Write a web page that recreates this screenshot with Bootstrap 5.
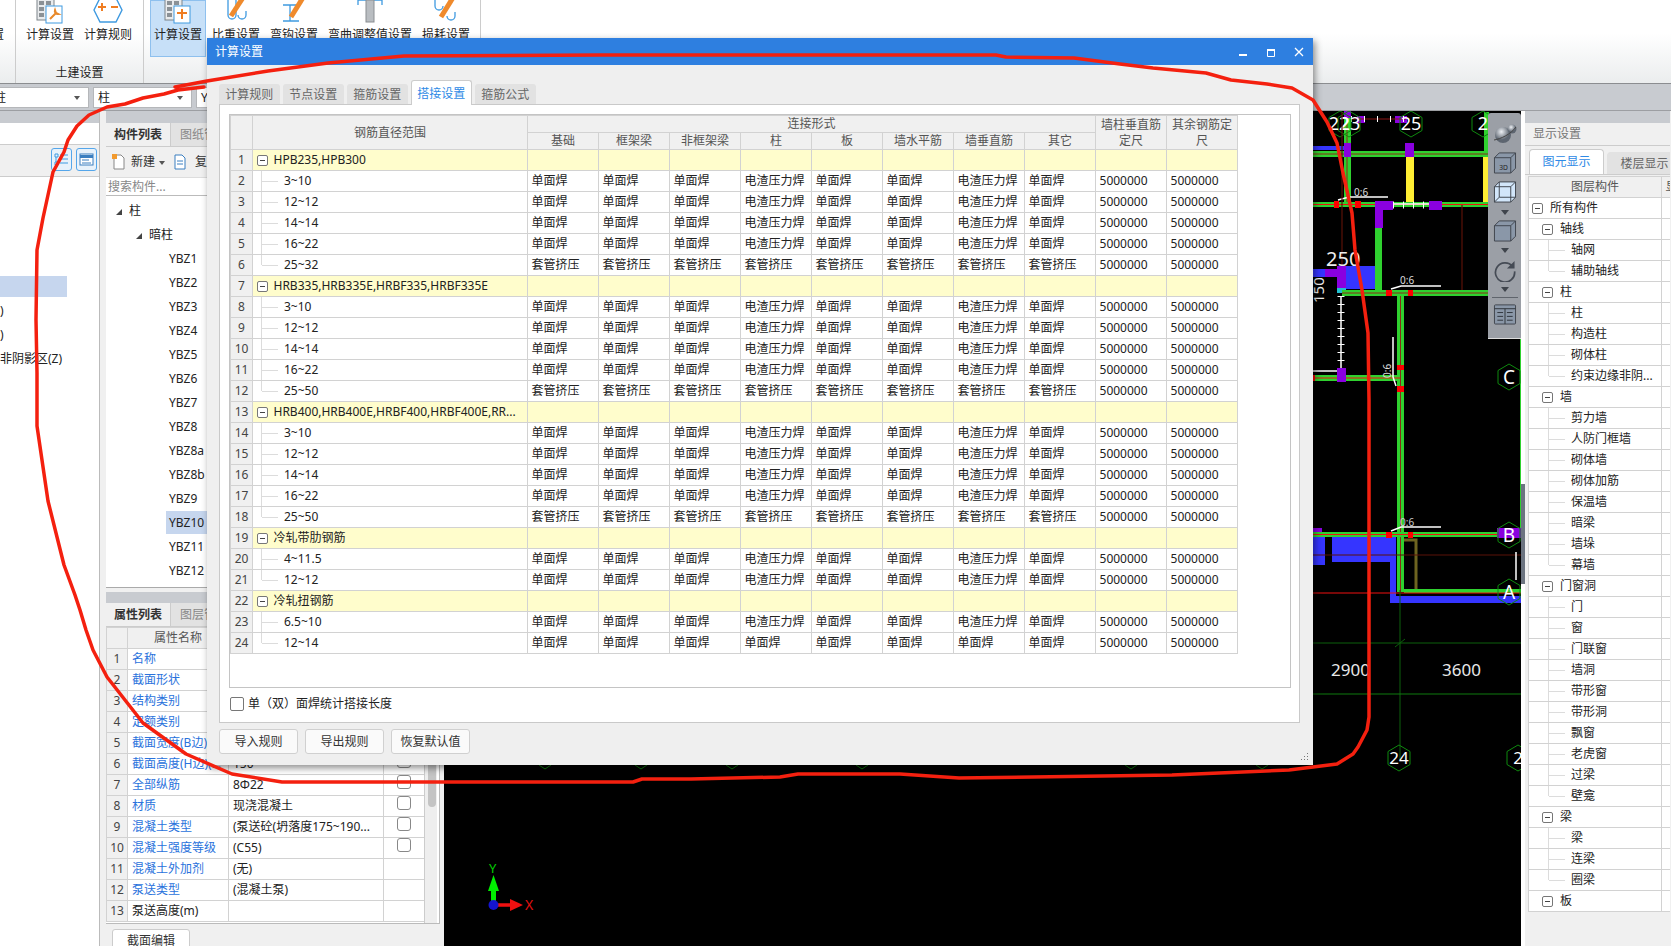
<!DOCTYPE html>
<html lang="zh-CN">
<head>
  <meta charset="UTF-8" />
  <title>计算设置</title>
  <link href="https://cdn.jsdelivr.net/npm/bootstrap@5.3.2/dist/css/bootstrap.min.css" rel="stylesheet">
  <style>
    html, body { margin: 0; height: 946px; overflow: hidden; }
    body { width: 1671px; position: relative; background: #f0f0f0; color: #222; font: 12px/1.3 "Noto Sans", "Noto Sans CJK SC", sans-serif; }

    /* ribbon */
    .rib { height: 83px; background: linear-gradient(#fff 40%, #ebedee); overflow: hidden; }
    .rib-group { height: 83px; border-right: 1px solid #ccc; flex: none; }
    .rib-item { height: 57px; text-align: center; white-space: nowrap; flex: none; }
    .rib-item svg { display: block; margin: 0 auto 3px; }
    .rib-on { background: #c7e0f8; box-shadow: inset 0 0 0 1px #8ec0ee; }
    .rib-label { line-height: 32px; text-align: center; }
    .combo-bar { height: 27px; background: #c8cbd0; border-top: 1px solid #8b8d90; padding-top: 3px; }
    .combo { height: 21px; background: #fff; line-height: 20px; padding-left: 4px; position: relative; flex: none; border: 1px solid #b5b7ba; }
    .combo::after { content: ""; position: absolute; right: 8px; top: 8px; border: 3px solid transparent; border-top: 4px solid #555; }

    .work { height: 836px; border-top: 1px solid #9c9ea2; }
    .band { height: 12px; background: #c8cbd0; }
    .pane-a { width: 100px; background: #fff; border-right: 1px solid #bbb; flex: none; }
    .pane-a-tools { height: 33px; background: #f0f0f0; border-top: 1px solid #ccc; border-bottom: 1px solid #ccc; margin-top: 21px; padding: 3px 2px 0 0; }
    .tool-btn { width: 21px; height: 23px; border: 1px solid #55a6ea; border-radius: 3px; background: #e8f2fb; }
    .tool-btn svg { display: block; margin: 3px auto 0; }
    .pane-a-list { padding-top: 99px; white-space: nowrap; overflow: hidden; }
    .pane-a-list div { height: 21px; line-height: 21px; margin-bottom: 3px; }
    .pane-a-list .hit { width: 67px; background: #c6d6ee; }
    .pane-b { width: 334px; margin-left: 6px; flex: none; background: #f0f0f0; }
    .pane-tabs { height: 24px; border-bottom: 1px solid #ccc; }
    .pane-tab { width: 65px; text-align: center; line-height: 24px; font-weight: 700; color: #333; border-right: 1px solid #ccc; }
    .pane-tab-off { background: #e2e2e2; color: #888; font-weight: 400; width: 80px; text-align: left; padding-left: 9px; }
    .tools-b { height: 30px; padding-left: 5px; color: #333; }
    .search-b { height: 19px; line-height: 18px; background: #fff; color: #888; padding-left: 2px; border-top: 1px solid #ddd; border-bottom: 1px solid #bbb; }
    .tree-b { height: 392px; padding-top: 3px; background: #fff; border-bottom: 1px solid #aaa; }
    .tree-b div { height: 24px; line-height: 24px; white-space: nowrap; }
    .tree-b .lv2 { padding-left: 63px; }
    .tree-b .hit span { background: #c6d6ee; padding: 3px 5px 3px 3px; margin-left: -3px; }
    .tri { display: inline-block; border: 3px solid transparent; border-right-color: #444; border-bottom-color: #444; margin-right: 7px; }
    .gap-band { margin-top: 4px; height: 11px; background: #c8cbd0; }

    .grid-tb { table-layout: fixed; border-collapse: collapse; margin: 0; color: #222; --bs-border-color: #d2d2d2; }
    #lapTb { width: 1007px; }
    #propTb { width: 318px; }
    #layerTb { width: 163px; }
    .grid-tb td, .grid-tb th { padding: 0 3.5px; height: 21px; line-height: 20px; font-weight: 400; font-size: 12px; white-space: nowrap; overflow: hidden; background-color: #fff; color: #222; border: 1px solid #d2d2d2; box-shadow: none; }
    .grid-tb th { background-color: #f0f0f0; color: #555; text-align: center; vertical-align: middle; }
    .grid-tb .num { background-color: #f0f0f0; color: #444; text-align: center; padding: 0; }
    .grid-tb .sum td { background-color: #fffdcc; }
    .grid-tb .sum td.num { background-color: #f0f0f0; }

    .dlg-head th { height: 17px; line-height: 16px; padding: 0; }
    .dlg-head .two { white-space: normal; }
    .box-minus { display: inline-block; width: 11px; height: 11px; border: 1px solid #777; border-radius: 2px; background: #fff; position: relative; vertical-align: -2px; margin-right: 6px; }
    .box-minus::after { content: ""; position: absolute; left: 2px; right: 2px; top: 4px; height: 1px; background: #444; }
    .twig { padding-left: 31px !important; position: relative; }
    .twig::before { content: ""; position: absolute; left: 9px; width: 16px; top: 10px; border-top: 1px solid #dcdcdc; }
    .twig::after { content: ""; position: absolute; left: 8px; top: 0; bottom: 0; border-left: 1px solid #dcdcdc; }
    .twig-end::after { bottom: 10px; }

    .prop-tb td.name { color: #2a72dc; }
    .prop-tb td { padding: 0 4px; }
    .prop-tb .chk { display: block; width: 14px; height: 14px; margin: 0 auto; border: 1px solid #888; border-radius: 3px; background: #fff; }
    .prop-wrap { height: 297px; overflow: hidden; position: relative; border-bottom: 1px solid #bbb; border-right: 1px solid #bbb; background: #fff; }
    .prop-scroll { position: absolute; left: 318px; top: 0; bottom: 0; width: 13px; background: #eee; border-left: 1px solid #ccc; }
    .prop-thumb { position: absolute; left: 3px; width: 8px; top: 100px; height: 80px; border-radius: 4px; background: #c4c4c4; }
    .edit-btn { width: 78px; height: 24px; margin: 5px 0 0 6px; border: 1px solid #ccc; border-radius: 3px 3px 0 0; background: #fff; text-align: center; line-height: 22px; color: #333; }

    .canvas-view { display: block; flex: none; background: #000; }
    .cv-wrap { position: relative; flex: none; width: 1077px; }
    .view-tools { position: absolute; right: 0; top: 2px; width: 33px; height: 226px; background: #9b9fa6; border-radius: 3px 3px 0 0; border-bottom: 1px solid #ddd; padding-top: 10px; }
    .view-tools svg { display: block; flex: none; }
    .view-caret { border: 4px solid transparent; border-top: 5px solid #3f444c; border-bottom: 0; flex: none; height: 0; }
    .vt-4 { margin-top: 4px; } .vt-5 { margin-top: 5px; } .vt-6 { margin-top: 6px; } .vt-7 { margin-top: 7px; } .vt-8 { margin-top: 8px; }
    .view-rule { width: 26px; height: 1px; background: #5f646c; flex: none; }
    .cv-strip { width: 4px; flex: none; background: #fff; position: relative; }
    .cv-strip::after { content: ""; position: absolute; left: 0; right: 0; top: 373px; height: 100px; background: #6c7480; }

    .pane-r { width: 145px; flex: none; overflow: hidden; background: #f0f0f0; }
    .pane-r-head { height: 23px; line-height: 22px; padding-left: 8px; color: #777; border-bottom: 1px solid #ccc; }
    .pane-r-tabs { height: 27px; margin-top: 2px; padding-left: 4px; align-items: flex-end; border-bottom: 1px solid #ccc; white-space: nowrap; }
    .pane-r-tab { width: 75px; height: 25px; line-height: 24px; text-align: center; background: #fff; color: #2e8ae6; border: 1px solid #ccc; border-bottom: 0; border-radius: 4px 4px 0 0; flex: none; }
    .pane-r-off { height: 22px; line-height: 21px; background: #e2e2e2; color: #666; margin-left: 3px; border-color: #e2e2e2; }
    .pane-r .grid-tb { margin: 1px 0 0 3px; }
    .pane-r .twig { padding-left: 42px !important; }
    .pane-r .twig::before { left: 20px; width: 16px; }
    .pane-r .twig::after { left: 19px; }
    .pane-r .lv1 { padding-left: 13px; }
    .pane-r .lv0 { padding-left: 3px; }
    .pane-r .box-minus { margin-right: 7px; }
    .pane-r .grid-tb td:first-child { padding-right: 0; }

    /* settings dialog */
    .dlg { position: absolute; left: 207px; top: 38px; width: 1106px; height: 727px; background: #efefef; box-shadow: 2px 3px 7px rgba(0,0,0,.45); border-radius: 0; border: 0; }
    .dlg-title { height: 27px; background: #2e7fe0; color: #fff; padding: 0 0 0 8px; line-height: 27px; }
    .win-ctl { width: 28px; height: 27px; position: relative; flex: none; }
    .dlg-tabs { margin: 15px 0 0 12px; height: 24px; border: 0; gap: 3.5px; align-items: flex-end; }
    .dlg-tab { height: 20px; width: 60.5px; line-height: 21px; text-align: center; background: #e2e2e2; color: #666; border-radius: 3px 3px 0 0; }
    .dlg-tab-on { height: 25px; line-height: 25px; background: #fff; color: #2e8ae6; border: 1px solid #ccc; border-bottom: 0; margin-bottom: -1px; position: relative; z-index: 1; }
    .dlg-panel { margin-left: 12px; width: 1081px; height: 619px; background: #fff; border: 1px solid #c9c9c9; padding: 9px 9px 0; }
    .dlg-frame { width: 1062px; height: 574px; border: 1px solid #c4c4c4; overflow: hidden; }
    .dlg-check { height: 31px; padding-left: 1px; color: #222; }
    .dlg-check .sq { width: 14px; height: 14px; border: 1px solid #777; border-radius: 2px; background: #fff; margin-right: 4px; }
    .dlg-btns { margin: 6px 0 0 12px; gap: 7px; }
    .dlg-btn { width: 79px; height: 25px; padding: 0; line-height: 23px; font-size: 12px; background: #fafafa; border: 1px solid #d0d0d0; border-radius: 3px; color: #333; }
    .grip { position: absolute; right: 4px; bottom: 4px; }
    .ink { position: absolute; left: 0; top: 0; pointer-events: none; }
  </style>
</head>
<body>

  <div class="rib d-flex">
    <div class="rib-group d-flex" style="width:16px"><div class="rib-item" style="margin-left:-8px;padding-top:27px">置</div></div>
    <div class="rib-group" style="width:128px">
      <div class="d-flex" style="padding-left:5px">
        <div class="rib-item" style="width:58px">
          <svg width="30" height="24" viewBox="0 0 30 24"><rect x="2" y="-4" width="17" height="24" fill="#e9ebed" stroke="#7d8489"/><path d="M4 1h5v4H4zM11 1h5v4h-5zM4 7h5v4H4zM4 13h5v4H4z" fill="#8b9196"/><rect x="11" y="6" width="16" height="17" fill="#fff" stroke="#3f9ae0"/><path d="M15 19l6-6M20 10a3 3 0 0 0 3 4l-2-1z" stroke="#e8892a" stroke-width="2" fill="none"/></svg>
          计算设置
        </div>
        <div class="rib-item" style="width:58px">
          <svg width="32" height="24" viewBox="0 0 32 24"><path d="M8-2h16l6 12-6 12H8L2 10z" fill="#fff" stroke="#3f9ae0" stroke-width="1.4"/><path d="M6 7h8M10 3v8M19 7h7" stroke="#ef7d22" stroke-width="2"/></svg>
          计算规则
        </div>
      </div>
      <div class="rib-label">土建设置</div>
    </div>
    <div class="rib-group" style="width:337px">
      <div class="d-flex" style="padding-left:6px">
        <div class="rib-item rib-on" style="width:56px">
          <svg width="30" height="24" viewBox="0 0 30 24"><rect x="2" y="-4" width="17" height="24" fill="#e9ebed" stroke="#7d8489"/><path d="M4 1h5v4H4zM11 1h5v4h-5zM4 7h5v4H4zM4 13h5v4H4z" fill="#8b9196"/><rect x="11" y="6" width="16" height="17" fill="#fff" stroke="#3f9ae0"/><path d="M19 9v10M14 13h10" stroke="#ef7d22" stroke-width="2"/></svg>
          计算设置
        </div>
        <div class="rib-item" style="width:60px">
          <svg width="28" height="24" viewBox="0 0 28 24"><path d="M6-2v17a4 4 0 0 0 8 0V-2M16 15a4 4 0 0 0 8 0v-4" fill="none" stroke="#3f9ae0" stroke-width="1.3"/><path d="M9 16L22-4" stroke="#ef8a2c" stroke-width="5"/></svg>
          比重设置
        </div>
        <div class="rib-item" style="width:56px">
          <svg width="28" height="24" viewBox="0 0 28 24"><path d="M3 5h16M3 21h16M10 5v16" fill="none" stroke="#3f9ae0" stroke-width="1.3"/><path d="M11 17L24-4" stroke="#ef8a2c" stroke-width="5"/></svg>
          弯钩设置
        </div>
        <div class="rib-item" style="width:96px">
          <svg width="26" height="24" viewBox="0 0 26 24"><path d="M1 5V0h24v5" fill="none" stroke="#3f9ae0" stroke-width="1.3"/><rect x="9" y="0" width="8" height="22" fill="#b9bdc1" stroke="#8a8e92"/></svg>
          弯曲调整值设置
        </div>
        <div class="rib-item" style="width:56px">
          <svg width="28" height="24" viewBox="0 0 28 24"><path d="M3-2v8a4 4 0 0 0 8 0M15 16a4 4 0 0 0 8 0v-4" fill="none" stroke="#3f9ae0" stroke-width="1.3"/><path d="M9 17L22-4" stroke="#ef8a2c" stroke-width="5"/></svg>
          损耗设置
        </div>
      </div>
    </div>
  </div>

  <div class="combo-bar d-flex gap-1">
    <div class="combo" style="width:100px;margin-left:-11px">柱</div>
    <div class="combo" style="width:99px">柱</div>
    <div class="combo" style="width:70px">YBZ10</div>
  </div>

  <div class="work d-flex">
    <div class="pane-a">
      <div class="band"></div>
      <div class="pane-a-tools d-flex justify-content-end gap-1">
        <div class="tool-btn"><svg width="15" height="15" viewBox="0 0 15 15"><path d="M1 2h3v3H1zM1 10h3v3H1z" fill="none" stroke="#3f9ae0"/><path d="M6 3h8M6 7h8M6 11h8M2 5v5" stroke="#3f9ae0"/></svg></div>
        <div class="tool-btn"><svg width="15" height="15" viewBox="0 0 15 15"><rect x="1" y="2" width="13" height="11" fill="#fff" stroke="#3a7ec0"/><path d="M1 3h13v3H1z" fill="#3a7ec0"/><path d="M3 8h7M3 11h9" stroke="#3a7ec0"/></svg></div>
      </div>
      <div class="pane-a-list">
        <div class="hit"></div>
        <div>)</div>
        <div>)</div>
        <div>非阴影区(Z)</div>
      </div>
    </div>

    <div class="pane-b">
      <div class="band"></div>
      <div class="pane-tabs d-flex"><div class="pane-tab">构件列表</div><div class="pane-tab pane-tab-off">图纸管理</div></div>
      <div class="tools-b d-flex align-items-center">
        <svg width="16" height="18" viewBox="0 0 16 18"><path d="M3 2h7l3 3v11H3z" fill="#fff" stroke="#888"/><rect x="1" y="1" width="5" height="5" fill="#f29a2e"/></svg>
        <span class="ms-1">新建</span><span class="tri ms-1" style="border:3px solid transparent;border-top:4px solid #555;margin-top:4px;margin-right:8px"></span>
        <svg width="14" height="18" viewBox="0 0 14 18"><path d="M2 2h7l3 3v11H2z" fill="#fff" stroke="#3a7ec0"/><path d="M4 8h6M4 11h6" stroke="#3a7ec0"/></svg>
        <span class="ms-2">复制</span>
      </div>
      <div class="search-b">搜索构件...</div>
      <div class="tree-b" id="treeB"></div>
      <div class="gap-band"></div>
      <div class="pane-tabs d-flex"><div class="pane-tab">属性列表</div><div class="pane-tab pane-tab-off">图层管理</div></div>
      <div class="prop-wrap">
        <table class="table table-bordered grid-tb prop-tb" id="propTb">
          <colgroup><col style="width:21px"><col style="width:101px"><col style="width:155px"><col style="width:41px"></colgroup>
        </table>
        <div class="prop-scroll"><div class="prop-thumb"></div></div>
      </div>
      <div class="edit-btn">截面编辑</div>
    </div>

    <div class="cv-wrap ms-1">
      <svg class="canvas-view" width="1077" height="835" viewBox="445 111 1077 835">
        <defs><polygon id="hx" points="0,-13 11,-6.5 11,6.5 0,13 -11,6.5 -11,-6.5" fill="none" stroke="#0f8a0f"/></defs>
        <!-- walls top -->
        <path d="M1313 146h32v4h-32z" fill="#3535ff"/>
        <rect x="1345" y="112" width="7" height="95" fill="#2fd12f"/>
        <rect x="1485" y="112" width="5" height="45" fill="#2fd12f"/>
        <rect x="1407" y="157" width="8" height="45" fill="#ffee33"/>
        <rect x="1484" y="157" width="5" height="45" fill="#ffee33"/>
        <rect x="1313" y="151" width="176" height="6" fill="#2fd12f"/>
        <path d="M1313 154h176M1348 112v95" stroke="#8c2a18"/>
        <path d="M1345 143h7v14h-7zM1406 143h9v14h-9z" fill="#8a00e0"/>
        <path d="M1345 118h7v-8h-7zM1358 116h8v7h-8zM1396 116h12v7h-12z" fill="#8a00e0"/>
        <path d="M1352 119h55" stroke="#8c1414"/>
        <path d="M1352 119h55" stroke="#fff" stroke-width="6" stroke-dasharray="1 12"/>
        <use href="#hx" x="1341" y="124"/><use href="#hx" x="1350" y="124"/><use href="#hx" x="1412" y="124"/><use href="#hx" x="1484" y="124"/>
        <g fill="#fff" font-family="Noto Sans, sans-serif" font-size="18" text-anchor="middle">
          <text x="1340" y="130">22</text><text x="1351" y="130">23</text><text x="1412" y="130">25</text><text x="1484" y="130">2</text>
        </g>
        <rect x="1313" y="202" width="176" height="5" fill="#2fd12f"/>
        <path d="M1313 204.5h176" stroke="#f01010"/>
        <path d="M1335 201h5v7h-5zM1356 201h6v7h-6z" fill="#f00"/>
        <path d="M1376 201h18v9h-10v18h-8zM1430 201h13v9h-13z" fill="#8a00e0"/>
        <path d="M1394 204h36" stroke="#fff" stroke-width="1.5"/>
        <path d="M1394 205h36" stroke="#fff" stroke-width="7" stroke-dasharray="1 9"/>
        <path d="M1339 200l11-3h39" stroke="#fff" stroke-width="1.5" fill="none"/>
        <text x="1355" y="196" fill="#ddd" font-size="10" font-family="Noto Sans, sans-serif">0:6</text>
        <path d="M1343 112v178M1463 205v85" stroke="#5a1208" stroke-width="1.2"/>
        <rect x="1376" y="228" width="7" height="62" fill="#2fd12f"/>
        <rect x="1347" y="266" width="29" height="23" fill="#3535ff"/>
        <rect x="1313" y="269" width="25" height="8" fill="#3535ff"/>
        <rect x="1326" y="269" width="12" height="8" fill="#8a00e0"/>
        <rect x="1338" y="266" width="9" height="26" fill="#8a00e0"/>
        <rect x="1338" y="288" width="9" height="5" fill="#20c0d0"/>
        <rect x="1343" y="290" width="146" height="6" fill="#2fd12f"/>
        <path d="M1343 293h146" stroke="#8c2a18"/>
        <path d="M1387 290h6v6h-6zM1409 290h5v6h-5z" fill="#f00"/>
        <path d="M1392 289l10-3h40" stroke="#fff" stroke-width="1.5" fill="none"/>
        <text x="1401" y="284" fill="#ddd" font-size="10" font-family="Noto Sans, sans-serif">0:6</text>
        <text x="1327" y="266" fill="#eee" font-size="20" font-family="Noto Sans, sans-serif">250</text>
        <text transform="translate(1325 303) rotate(-90)" fill="#eee" font-size="15" font-family="Noto Sans, sans-serif">150</text>
        <path d="M1342 296v72" stroke="#fff" stroke-width="1.5"/>
        <path d="M1342 296v72" stroke="#fff" stroke-width="7" stroke-dasharray="1 7"/>
        <rect x="1398" y="296" width="7" height="296" fill="#2fd12f"/>
        <path d="M1401.5 296v296" stroke="#8c2a18"/>
        <rect x="1313" y="375" width="88" height="6" fill="#2fd12f"/>
        <path d="M1313 378h88" stroke="#f01010"/>
        <path d="M1313 371h29" stroke="#fff" stroke-width="1.5"/>
        <rect x="1338" y="368" width="9" height="14" fill="#8a00e0"/>
        <path d="M1313 375h3v6h-3zM1398 365h7v5h-7zM1398 386h7v6h-7z" fill="#f00"/>
        <path d="M1394 337v40l3 9" stroke="#fff" stroke-width="1.5" fill="none"/>
        <text transform="translate(1392 378) rotate(-90)" fill="#ddd" font-size="10" font-family="Noto Sans, sans-serif">0:6</text>
        <!-- walls bottom -->
        <path d="M1313 537h13v28h-13zM1333 537h64v66h125v-7h-125v-34h-64z" fill="#3535ff"/>
        <rect x="1391" y="562" width="6" height="41" fill="#3535ff"/>
        <rect x="1313" y="528" width="10" height="9" fill="#8a00e0"/>
        <rect x="1313" y="532" width="185" height="5" fill="#2fd12f"/>
        <path d="M1313 534.5h209" stroke="#f01010"/>
        <rect x="1498" y="528" width="24" height="10" fill="#8a00e0"/>
        <path d="M1387 532h6v6h-6zM1409 532h5v6h-5z" fill="#f00"/>
        <path d="M1392 531l10-4h40" stroke="#fff" stroke-width="1.5" fill="none"/>
        <text x="1401" y="526" fill="#ccc" font-size="10" font-family="Noto Sans, sans-serif">0:6</text>
        <path d="M1405 540h12v50" fill="none" stroke="#6e6420" stroke-width="3"/>
        <rect x="1405" y="589" width="117" height="4" fill="#2fd12f"/>
        <path d="M1313 555h209" stroke="#5a1208"/>
        <path d="M1313 593h209" stroke="#f01010"/>
        <rect x="1521" y="338" width="1" height="190" fill="#2fd12f"/>
        <path d="M1517 552v28" stroke="#fff" stroke-width="1.5"/>
        <use href="#hx" x="1510" y="377"/><use href="#hx" x="1510" y="535"/><use href="#hx" x="1510" y="592"/>
        <g fill="#fff" font-family="Noto Sans, sans-serif" font-size="19" text-anchor="middle">
          <text x="1510" y="384">C</text><text x="1510" y="542">B</text><text x="1510" y="599">A</text>
        </g>
        <path d="M1313 643h209M1401 590v170" stroke="#0c600c"/>
        <path d="M1313 694h209" stroke="#0e7a0e"/>
        <path d="M1396 647l10-8" stroke="#0c600c"/>
        <g fill="#e8e8e8" font-family="Noto Sans, sans-serif" font-size="17">
          <text x="1332" y="676">2900</text><text x="1443" y="676">3600</text>
        </g>
        <use href="#hx" x="1400" y="758"/><use href="#hx" x="1519" y="758"/>
        <g fill="#fff" font-family="Noto Sans, sans-serif" font-size="17" text-anchor="middle">
          <text x="1400" y="764">24</text><text x="1519" y="764">2</text>
        </g>
        <g fill="none" stroke="#0b7a0b">
          <path d="M540 765l6 4 6-4M636 765l6 4 6-4M727 765l6 4 6-4M857 765l6 4 6-4M1126 765l6 4 6-4M1257 765l6 4 6-4"/>
        </g>
        <!-- coordinate axes -->
        <path d="M494.5 903v-15" stroke="#0e0" stroke-width="5"/>
        <path d="M489 891l5.500-16 5.500 16z" fill="#0e0"/>
        <path d="M498 905h15" stroke="#f01010" stroke-width="3.500"/>
        <path d="M511 899l13 6-13 6z" fill="#f01010"/>
        <circle cx="494.500" cy="905" r="5" fill="#1414d0"/>
        <text x="490" y="873" fill="#0c0" font-size="13" font-family="Noto Sans, sans-serif">Y</text>
        <text x="526" y="910" fill="#e01010" font-size="14" font-family="Noto Sans, sans-serif">X</text>
      </svg>
      <div class="view-tools d-flex flex-column align-items-center">
        <svg width="24" height="20" viewBox="0 0 24 20"><defs><radialGradient id="gl" cx=".4" cy=".3"><stop offset="0" stop-color="#eef1f5"/><stop offset="1" stop-color="#5d6570"/></radialGradient></defs><circle cx="10" cy="12" r="8" fill="url(#gl)"/><circle cx="19" cy="6" r="4.500" fill="url(#gl)"/><path d="M1 17C8 16 18 11 23 4" stroke="#444" fill="none"/></svg>
        <svg class="vt-8" width="24" height="23" viewBox="0 0 24 24"><path d="M1 7l5-5h17v16l-5 5H1z" fill="#8a97a8" stroke="#3f444c"/><path d="M1 7h17v16M18 7l5-5" fill="none" stroke="#3f444c"/><text x="6" y="20" font-size="7" fill="#222" font-family="Noto Sans, sans-serif">3D</text></svg>
        <svg class="vt-6" width="24" height="23" viewBox="0 0 24 24"><path d="M1 7l5-5h17v16l-5 5H1z" fill="#d2e6fa" stroke="#3f444c"/><path d="M1 7h17v16M18 7l5-5M6 2v16l-5 5M6 18h17" fill="none" stroke="#3f444c"/></svg>
        <div class="view-caret vt-7"></div>
        <svg class="vt-4" width="24" height="23" viewBox="0 0 24 24"><path d="M1 7l5-5h17v16l-5 5H1z" fill="#8a97a8" stroke="#3f444c"/><path d="M1 7h17v16M18 7l5-5" fill="none" stroke="#3f444c"/></svg>
        <div class="view-caret vt-6"></div>
        <svg class="vt-6" width="24" height="23" viewBox="0 0 24 24"><path d="M20 8A10 10 0 1 0 22 13" fill="none" stroke="#454b55" stroke-width="1.800"/><path d="M22 2v8h-8z" fill="#454b55"/></svg>
        <div class="view-caret vt-5"></div>
        <div class="view-rule vt-5"></div>
        <svg class="vt-4" width="24" height="23" viewBox="0 0 24 24"><rect x="1" y="3" width="22" height="20" rx="1" fill="#8a97a8" stroke="#3f444c"/><path d="M1 7h22M12 7v16M4 11h6M14 11h6M4 15h6M14 15h6M4 19h6M14 19h6" stroke="#2f343b"/></svg>
      </div>
    </div>
    <div class="cv-strip"></div>

    <div class="pane-r">
      <div class="band"></div>
      <div class="pane-r-head">显示设置</div>
      <div class="pane-r-tabs d-flex"><div class="pane-r-tab">图元显示</div><div class="pane-r-tab pane-r-off">楼层显示</div></div>
      <table class="table table-bordered grid-tb" id="layerTb">
        <colgroup><col style="width:133px"><col style="width:30px"></colgroup>
      </table>
    </div>
  </div>

  <div class="dlg card">
    <div class="dlg-title d-flex align-items-center">
      <div class="flex-grow-1">计算设置</div>
      <div class="win-ctl"><svg width="28" height="27"><rect x="10" y="15" width="8" height="2" fill="#fff"/></svg></div>
      <div class="win-ctl"><svg width="28" height="27"><path d="M10.500 10.500h7v7h-7z" fill="none" stroke="#fff"/><path d="M10 10h8v2h-8z" fill="#fff"/></svg></div>
      <div class="win-ctl"><svg width="28" height="27"><path d="M10 9l8 8M18 9l-8 8" stroke="#fff" stroke-width="1.300"/></svg></div>
    </div>
    <div class="dlg-tabs d-flex">
      <div class="dlg-tab">计算规则</div>
      <div class="dlg-tab">节点设置</div>
      <div class="dlg-tab">箍筋设置</div>
      <div class="dlg-tab dlg-tab-on">搭接设置</div>
      <div class="dlg-tab">箍筋公式</div>
    </div>
    <div class="dlg-panel">
      <div class="dlg-frame">
        <table class="table table-bordered grid-tb" id="lapTb">
          <colgroup>
            <col style="width:22px"><col style="width:275px">
            <col style="width:71px"><col style="width:71px"><col style="width:71px"><col style="width:71px"><col style="width:71px"><col style="width:71px"><col style="width:71px"><col style="width:71px"><col style="width:71px"><col style="width:71px">
          </colgroup>
          <thead class="dlg-head">
            <tr><th rowspan="2"></th><th rowspan="2">钢筋直径范围</th><th colspan="8">连接形式</th><th rowspan="2" class="two">墙柱垂直筋定尺</th><th rowspan="2" class="two">其余钢筋定尺</th></tr>
            <tr><th>基础</th><th>框架梁</th><th>非框架梁</th><th>柱</th><th>板</th><th>墙水平筋</th><th>墙垂直筋</th><th>其它</th></tr>
          </thead>
          <tbody></tbody>
        </table>
      </div>
      <div class="dlg-check d-flex align-items-center"><span class="sq"></span>单（双）面焊统计搭接长度</div>
    </div>
    <div class="dlg-btns d-flex">
      <button type="button" class="btn dlg-btn">导入规则</button>
      <button type="button" class="btn dlg-btn">导出规则</button>
      <button type="button" class="btn dlg-btn">恢复默认值</button>
    </div>
    <svg class="grip" width="9" height="9"><path d="M7 1h1v1H7zM4 4h1v1H4zM7 4h1v1H7zM1 7h1v1H1zM4 7h1v1H4zM7 7h1v1H7z" fill="#777"/></svg>
  </div>

  <!-- hand drawn red mark on top of the shot -->
  <svg class="ink" width="1671" height="946" viewBox="0 0 1671 946">
    <g fill="none" stroke="#f4200f" stroke-width="3.5" stroke-linecap="round" stroke-linejoin="round">
      <path d="M175 87L207 81L268 71L328 63L404 56L600 55L996 55L1006 57L1074 58L1120 64L1153 68L1206 73L1231 80L1267 84L1292 88L1313 100L1327 122L1337 143L1343 173L1352 213L1355 250L1362 290L1368 333L1369 400L1369 717L1367 730L1358 747L1353 754L1337 764L1289 770L1172 775L959 778L900 774L798 774L780 777L691 779L642 779L633 782L282 782L232 774L186 754L143 723L107 677L93 650L86 630L80 610L75 595L64 565L48 501L37 426L37 373L36 320L37 250L43 218L53 172L64 152L68 140L77 126L89 115L107 107L125 104L143 98L164 94L178 90L204 87"/>
    </g>
  </svg>

  <script>
    const weld = '单面焊', slag = '电渣压力焊', sleeve = '套管挤压', len = '5000000';
    const norm = [weld, weld, weld, slag, weld, weld, slag, weld, len, len];
    const press = [sleeve, sleeve, sleeve, sleeve, sleeve, sleeve, sleeve, sleeve, len, len];
    const allWeld = [weld, weld, weld, weld, weld, weld, weld, weld, len, len];
    const groups = [
      ['HPB235,HPB300', [['3~10', norm], ['12~12', norm], ['14~14', norm], ['16~22', norm], ['25~32', press]]],
      ['HRB335,HRB335E,HRBF335,HRBF335E', [['3~10', norm], ['12~12', norm], ['14~14', norm], ['16~22', norm], ['25~50', press]]],
      ['HRB400,HRB400E,HRBF400,HRBF400E,RR...', [['3~10', norm], ['12~12', norm], ['14~14', norm], ['16~22', norm], ['25~50', press]]],
      ['冷轧带肋钢筋', [['4~11.5', norm], ['12~12', norm]]],
      ['冷轧扭钢筋', [['6.5~10', norm], ['12~14', allWeld]]]
    ];
    let n = 0, html = '';
    groups.forEach(g => {
      n++;
      html += '<tr class="sum"><td class="num">' + n + '</td><td class="text-truncate"><span class="box-minus"></span>' + g[0] + '</td>' + '<td></td>'.repeat(10) + '</tr>';
      g[1].forEach((r, i) => {
        n++;
        const end = i === g[1].length - 1 ? ' twig-end' : '';
        html += '<tr><td class="num">' + n + '</td><td class="twig' + end + '">' + r[0] + '</td>' + r[1].map(c => '<td>' + c + '</td>').join('') + '</tr>';
      });
    });
    document.querySelector('#lapTb tbody').innerHTML = html;

    // component tree
    let tree = '<div style="padding-left:10px"><span class="tri"></span>柱</div><div style="padding-left:30px"><span class="tri"></span>暗柱</div>';
    ['YBZ1','YBZ2','YBZ3','YBZ4','YBZ5','YBZ6','YBZ7','YBZ8','YBZ8a','YBZ8b','YBZ9','YBZ10','YBZ11','YBZ12'].forEach(t => {
      tree += '<div class="lv2' + (t === 'YBZ10' ? ' hit' : '') + '"><span>' + t + '</span></div>';
    });
    document.getElementById('treeB').innerHTML = tree;

    // property list
    const props = [
      ['名称', 'YBZ10', 1], ['截面形状', '异形', 1], ['结构类别', '暗柱', 1], ['定额类别', '普通柱', 1],
      ['截面宽度(B边)(mm)', '400', 1], ['截面高度(H边)(mm)', '150', 1], ['全部纵筋', '8Φ22', 1], ['材质', '现浇混凝土', 1],
      ['混凝土类型', '(泵送砼(坍落度175~190...', 1], ['混凝土强度等级', '(C55)', 1], ['混凝土外加剂', '(无)', 0], ['泵送类型', '(混凝土泵)', 0],
      ['泵送高度(m)', '', 0]
    ];
    let p = '<thead><tr><th></th><th>属性名称</th><th>属性值</th><th>附加</th></tr></thead><tbody>';
    props.forEach((r, i) => {
      const blue = i < 12 ? ' name' : '';
      p += '<tr><td class="num">' + (i + 1) + '</td><td class="text-truncate' + blue + '">' + r[0] + '</td><td>' + r[1] + '</td><td>' + (r[2] ? '<span class="chk"></span>' : '') + '</td></tr>';
    });
    document.getElementById('propTb').insertAdjacentHTML('beforeend', p + '</tbody>');

    // layer tree on the right
    const layers = [
      [0,'所有构件'],[1,'轴线'],[2,'轴网'],[2,'辅助轴线'],[1,'柱'],[2,'柱'],[2,'构造柱'],[2,'砌体柱'],[2,'约束边缘非阴...'],
      [1,'墙'],[2,'剪力墙'],[2,'人防门框墙'],[2,'砌体墙'],[2,'砌体加筋'],[2,'保温墙'],[2,'暗梁'],[2,'墙垛'],[2,'幕墙'],
      [1,'门窗洞'],[2,'门'],[2,'窗'],[2,'门联窗'],[2,'墙洞'],[2,'带形窗'],[2,'带形洞'],[2,'飘窗'],[2,'老虎窗'],[2,'过梁'],[2,'壁龛'],
      [1,'梁'],[2,'梁'],[2,'连梁'],[2,'圈梁'],[1,'板']
    ];
    let l = '<thead><tr><th>图层构件</th><th>显示</th></tr></thead><tbody>';
    layers.forEach((r, i) => {
      const next = layers[i + 1];
      if (r[0] === 2) {
        l += '<tr><td class="twig' + (!next || next[0] !== 2 ? ' twig-end' : '') + '">' + r[1] + '</td><td></td></tr>';
      } else {
        l += '<tr><td class="lv' + r[0] + '"><span class="box-minus"></span>' + r[1] + '</td><td></td></tr>';
      }
    });
    document.getElementById('layerTb').insertAdjacentHTML('beforeend', l + '</tbody>');
  </script>

  <script src="https://cdn.jsdelivr.net/npm/bootstrap@5.3.2/dist/js/bootstrap.bundle.min.js"></script>
</body>
</html>
